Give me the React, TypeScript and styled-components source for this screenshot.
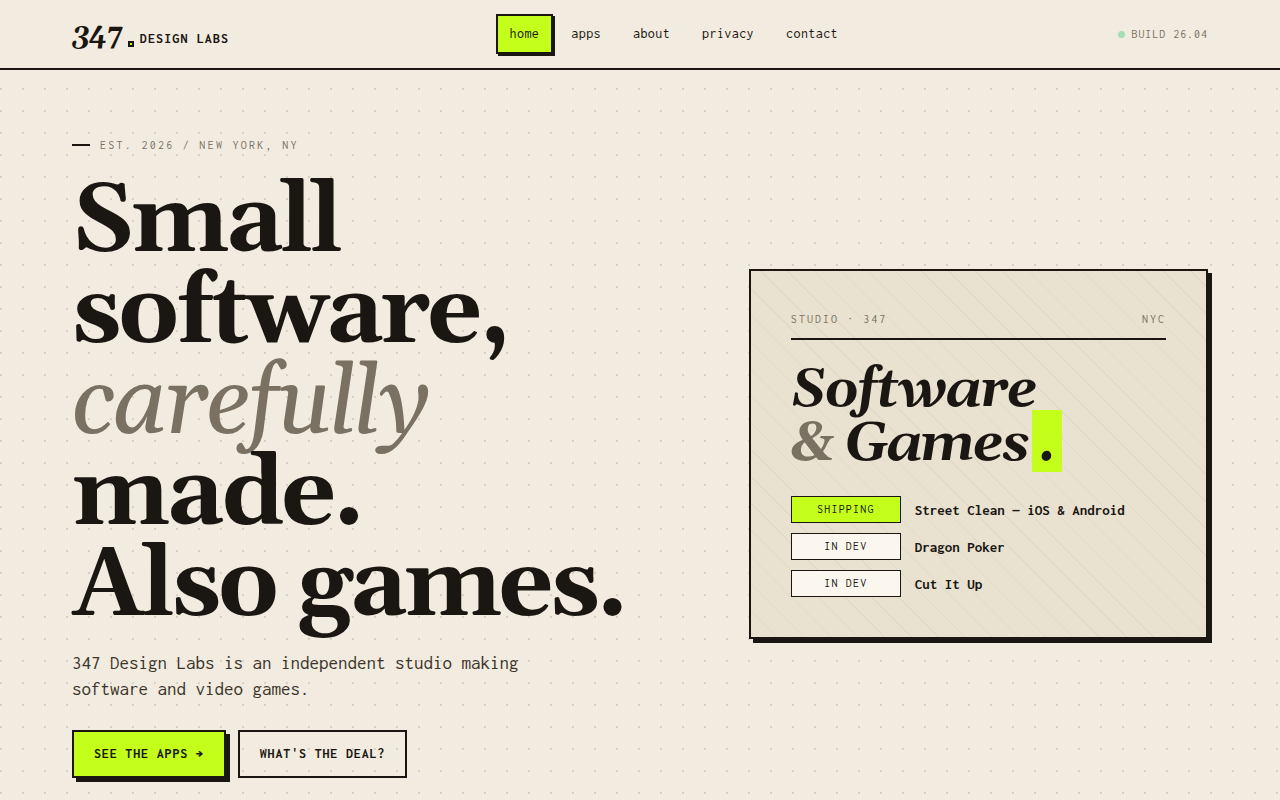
import React from "react";
import styled, { createGlobalStyle, css } from "styled-components";

const ink = "#1a1712";
const paper = "#f2ebdf";
const lime = "#c4ff1c";
const muted = "#7a7162";
const serif = `Gelasio, Georgia, "Liberation Serif", serif`;
const mono = `Inconsolata, Consolas, "Liberation Mono", monospace`;

const GlobalStyle = createGlobalStyle`
  *, *::before, *::after { box-sizing: border-box; }
  body {
    margin: 0;
    color: ${ink};
    background-color: ${paper};
    background-image: radial-gradient(circle at 1px 1px, rgba(26, 23, 18, 0.12) 1px, transparent 1px);
    background-size: 22px 22px;
    font-family: ${mono};
  }
  h1, h2, p, ul { margin: 0; padding: 0; }
  a { color: inherit; text-decoration: none; }
`;

const Header = styled.header`
  display: flex;
  align-items: center;
  justify-content: space-between;
  padding: 14px 72px;
  background: ${paper};
  border-bottom: 2px solid ${ink};
`;

const Brand = styled.a`
  display: flex;
  align-items: baseline;
  gap: 6px;
  padding-top: 2px;
`;

const BrandNumber = styled.span`
  font: italic 700 28px/32px ${serif};
  letter-spacing: -0.02em;
`;

const BrandSquare = styled.span`
  align-self: flex-end;
  width: 6px;
  height: 6px;
  margin-bottom: 4px;
  border: 2px solid ${ink};
  background: ${lime};
`;

const BrandName = styled.span`
  font-size: 14px;
  font-weight: 700;
  letter-spacing: 0.08em;
`;

const Nav = styled.nav`
  display: flex;
  gap: 4px;
`;

const NavLink = styled.a<{ $active?: boolean }>`
  padding: 8px 12px;
  border: 2px solid transparent;
  font-size: 14px;
  line-height: 20px;
  letter-spacing: 0.03em;
  ${(p) =>
    p.$active &&
    css`
      background: ${lime};
      border-color: ${ink};
      box-shadow: 2px 2px 0 ${ink};
    `}
`;

const Build = styled.span`
  display: flex;
  align-items: center;
  gap: 6px;
  color: ${muted};
  font-size: 12px;
  letter-spacing: 0.08em;
`;

const StatusDot = styled.i`
  width: 7px;
  height: 7px;
  border-radius: 50%;
  background: #a3dfb6;
`;

const Hero = styled.main`
  display: grid;
  grid-template-columns: 1.3fr 1fr;
  gap: 80px;
  align-items: center;
  padding: 60px 72px;
`;

const Eyebrow = styled.p`
  display: flex;
  align-items: center;
  gap: 10px;
  color: ${muted};
  font-size: 12px;
  line-height: 30px;
  letter-spacing: 0.19em;

  &::before {
    content: "";
    width: 18px;
    height: 2px;
    background: ${ink};
  }
`;

const Title = styled.h1`
  margin-top: 18px;
  font: 700 96px/91px ${serif};
  letter-spacing: -3px;

  em {
    color: ${muted};
    font-weight: 400;
  }
`;

const Lead = styled.p`
  max-width: 480px;
  margin: 17px 0 28px;
  color: #3a342a;
  font-size: 19px;
  line-height: 26px;
`;

const Actions = styled.div`
  display: flex;
  gap: 12px;
`;

const Button = styled.button<{ $primary?: boolean }>`
  height: 48px;
  padding: 0 20px;
  border: 2px solid ${ink};
  color: ${ink};
  background: ${(p) => (p.$primary ? lime : "transparent")};
  box-shadow: ${(p) => (p.$primary ? `4px 4px 0 ${ink}` : "none")};
  font: 700 14px/20px ${mono};
  letter-spacing: 0.06em;
`;

const Card = styled.section`
  padding: 40px;
  border: 2px solid ${ink};
  box-shadow: 4px 4px 0 ${ink};
  background: repeating-linear-gradient(45deg, transparent 0 18px, rgba(26, 23, 18, 0.04) 18px 19px) #e9e2d0;
`;

const CardHead = styled.div`
  display: flex;
  justify-content: space-between;
  padding-bottom: 10px;
  border-bottom: 2px solid ${ink};
  color: ${muted};
  font-size: 12px;
  line-height: 17px;
  letter-spacing: 0.17em;
`;

const CardTitle = styled.h2`
  margin: 23px 0 25px;
  font: italic 700 54px/54px ${serif};
  letter-spacing: -0.03em;
`;

const Ampersand = styled.span`
  color: ${muted};
`;

const Stop = styled.span`
  display: inline-block;
  margin: -7px 0 -1px 4px;
  padding: 6px 7px 0;
  background: ${lime};
  line-height: 56px;
`;

const Projects = styled.ul`
  display: grid;
  gap: 10px;
  list-style: none;
`;

const Project = styled.li`
  display: grid;
  grid-template-columns: 110px 1fr;
  gap: 14px;
  align-items: center;
  font-size: 15px;
  font-weight: 700;
`;

const Tag = styled.span<{ $live?: boolean }>`
  border: 1px solid ${ink};
  background: ${(p) => (p.$live ? lime : "#fbf6ee")};
  font-size: 12px;
  font-weight: 400;
  line-height: 25px;
  letter-spacing: 0.1em;
  text-align: center;
`;

const links = ["home", "apps", "about", "privacy", "contact"];

const projects = [
  { tag: "SHIPPING", name: "Street Clean — iOS & Android", live: true },
  { tag: "IN DEV", name: "Dragon Poker" },
  { tag: "IN DEV", name: "Cut It Up" },
];

export default function App() {
  return (
    <>
      <GlobalStyle />
      <Header>
        <Brand href="#home">
          <BrandNumber>347</BrandNumber>
          <BrandSquare />
          <BrandName>DESIGN LABS</BrandName>
        </Brand>
        <Nav>
          {links.map((name, i) => (
            <NavLink key={name} href={`#${name}`} $active={i === 0}>
              {name}
            </NavLink>
          ))}
        </Nav>
        <Build>
          <StatusDot />
          BUILD 26.04
        </Build>
      </Header>
      <Hero>
        <div>
          <Eyebrow>EST. 2026 / NEW YORK, NY</Eyebrow>
          <Title>
            Small
            <br />
            software,
            <br />
            <em>carefully</em>
            <br />
            made.
            <br />
            Also games.
          </Title>
          <Lead>347 Design Labs is an independent studio making software and video games.</Lead>
          <Actions>
            <Button $primary>SEE THE APPS →</Button>
            <Button>WHAT'S THE DEAL?</Button>
          </Actions>
        </div>
        <Card>
          <CardHead>
            <span>STUDIO · 347</span>
            <span>NYC</span>
          </CardHead>
          <CardTitle>
            Software
            <br />
            <Ampersand>&amp;</Ampersand> Games<Stop>.</Stop>
          </CardTitle>
          <Projects>
            {projects.map((p) => (
              <Project key={p.name}>
                <Tag $live={p.live}>{p.tag}</Tag>
                {p.name}
              </Project>
            ))}
          </Projects>
        </Card>
      </Hero>
    </>
  );
}
